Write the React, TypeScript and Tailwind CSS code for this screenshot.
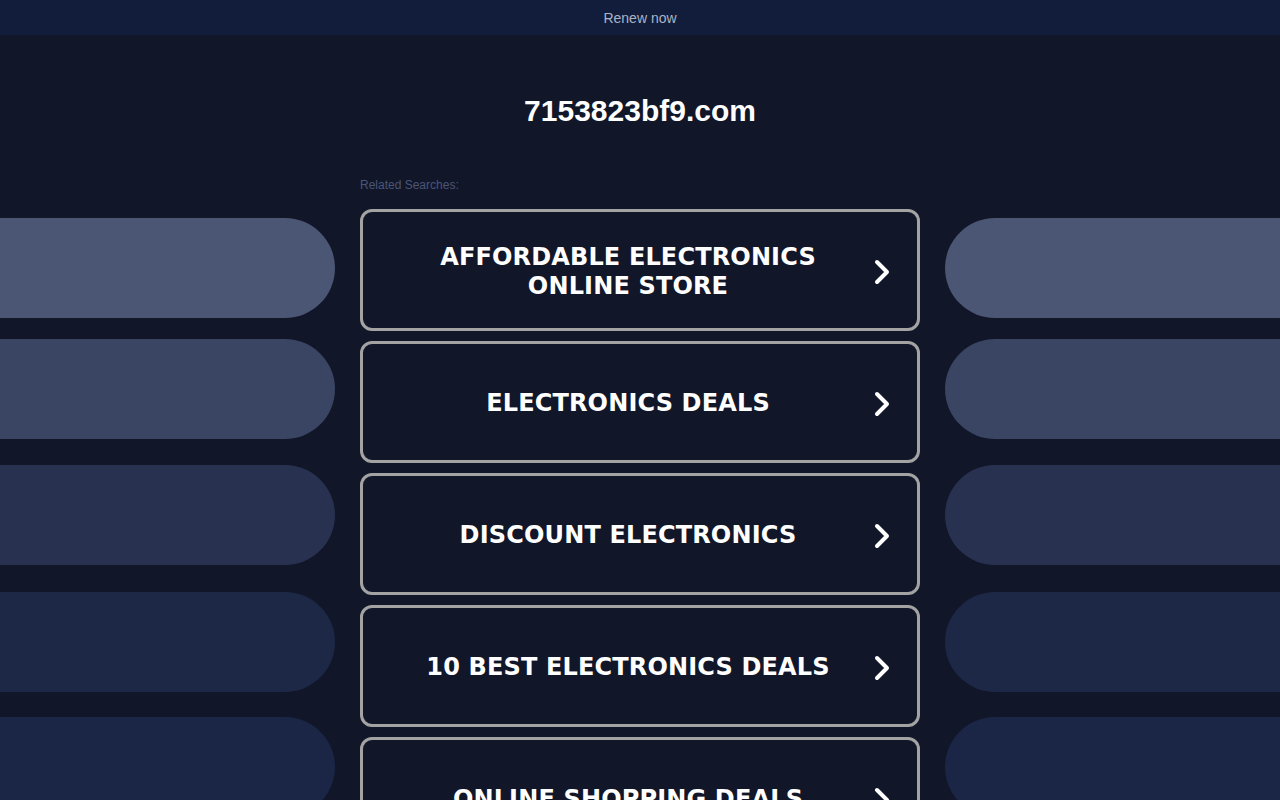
const searches = [
  ['AFFORDABLE ELECTRONICS', 'ONLINE STORE'],
  ['ELECTRONICS DEALS'],
  ['DISCOUNT ELECTRONICS'],
  ['10 BEST ELECTRONICS DEALS'],
  ['ONLINE SHOPPING DEALS'],
];

const pills = [
  { mt: 'mt-[218px]', bg: 'bg-[#4b5574]' },
  { mt: 'mt-[21px]', bg: 'bg-[#3a4463]' },
  { mt: 'mt-[26px]', bg: 'bg-[#283150]' },
  { mt: 'mt-[27px]', bg: 'bg-[#1d2746]' },
  { mt: 'mt-[25px]', bg: 'bg-[#1b2546]' },
];

function Chevron() {
  return (
    <svg width="18" height="30" viewBox="0 0 18 30" fill="none">
      <path d="M4 5l10 10-10 10" stroke="white" strokeWidth="4" strokeLinecap="round" strokeLinejoin="round" />
    </svg>
  );
}

export default function App() {
  return (
    <div className="h-[800px] overflow-hidden bg-[#111729] font-['Liberation_Sans',Arial,sans-serif]">
      <div className="h-[35px] bg-[#111d3a] flex items-center justify-center pt-px text-[14px] text-[#a9b4c7]">
        Renew now
      </div>
      <div className="flex">
        <div className="w-[335px] shrink-0 -mt-[35px] flex flex-col">
          {pills.map((p, i) => (
            <div key={i} className={`${p.mt} ${p.bg} h-[100px] rounded-r-[50px]`} />
          ))}
        </div>
        <div className="w-[560px] shrink-0 mx-[25px]">
          <h1 className="mt-[59px] text-center text-[30px] font-bold text-white leading-[34px]">7153823bf9.com</h1>
          <p className="mt-[50px] text-[12px] text-[#4b5578] leading-[14px]">Related Searches:</p>
          <div className="mt-[17px] flex flex-col gap-[10px]">
            {searches.map((lines, i) => (
              <div
                key={i}
                className="h-[122px] shrink-0 rounded-[12px] border-[3px] border-[#a3a3a3] bg-[#111729] flex items-center pt-[3px] pl-[20px] pr-[26px]"
              >
                <div className="flex-1 text-center font-['DejaVu_Sans',Verdana,sans-serif] font-bold text-[24px] leading-[29px] tracking-[0.15px] text-white">
                  {lines.map((l) => (
                    <div key={l}>{l}</div>
                  ))}
                </div>
                <Chevron />
              </div>
            ))}
          </div>
        </div>
        <div className="flex-1 -mt-[35px] flex flex-col">
          {pills.map((p, i) => (
            <div key={i} className={`${p.mt} ${p.bg} h-[100px] rounded-l-[50px]`} />
          ))}
        </div>
      </div>
    </div>
  );
}
